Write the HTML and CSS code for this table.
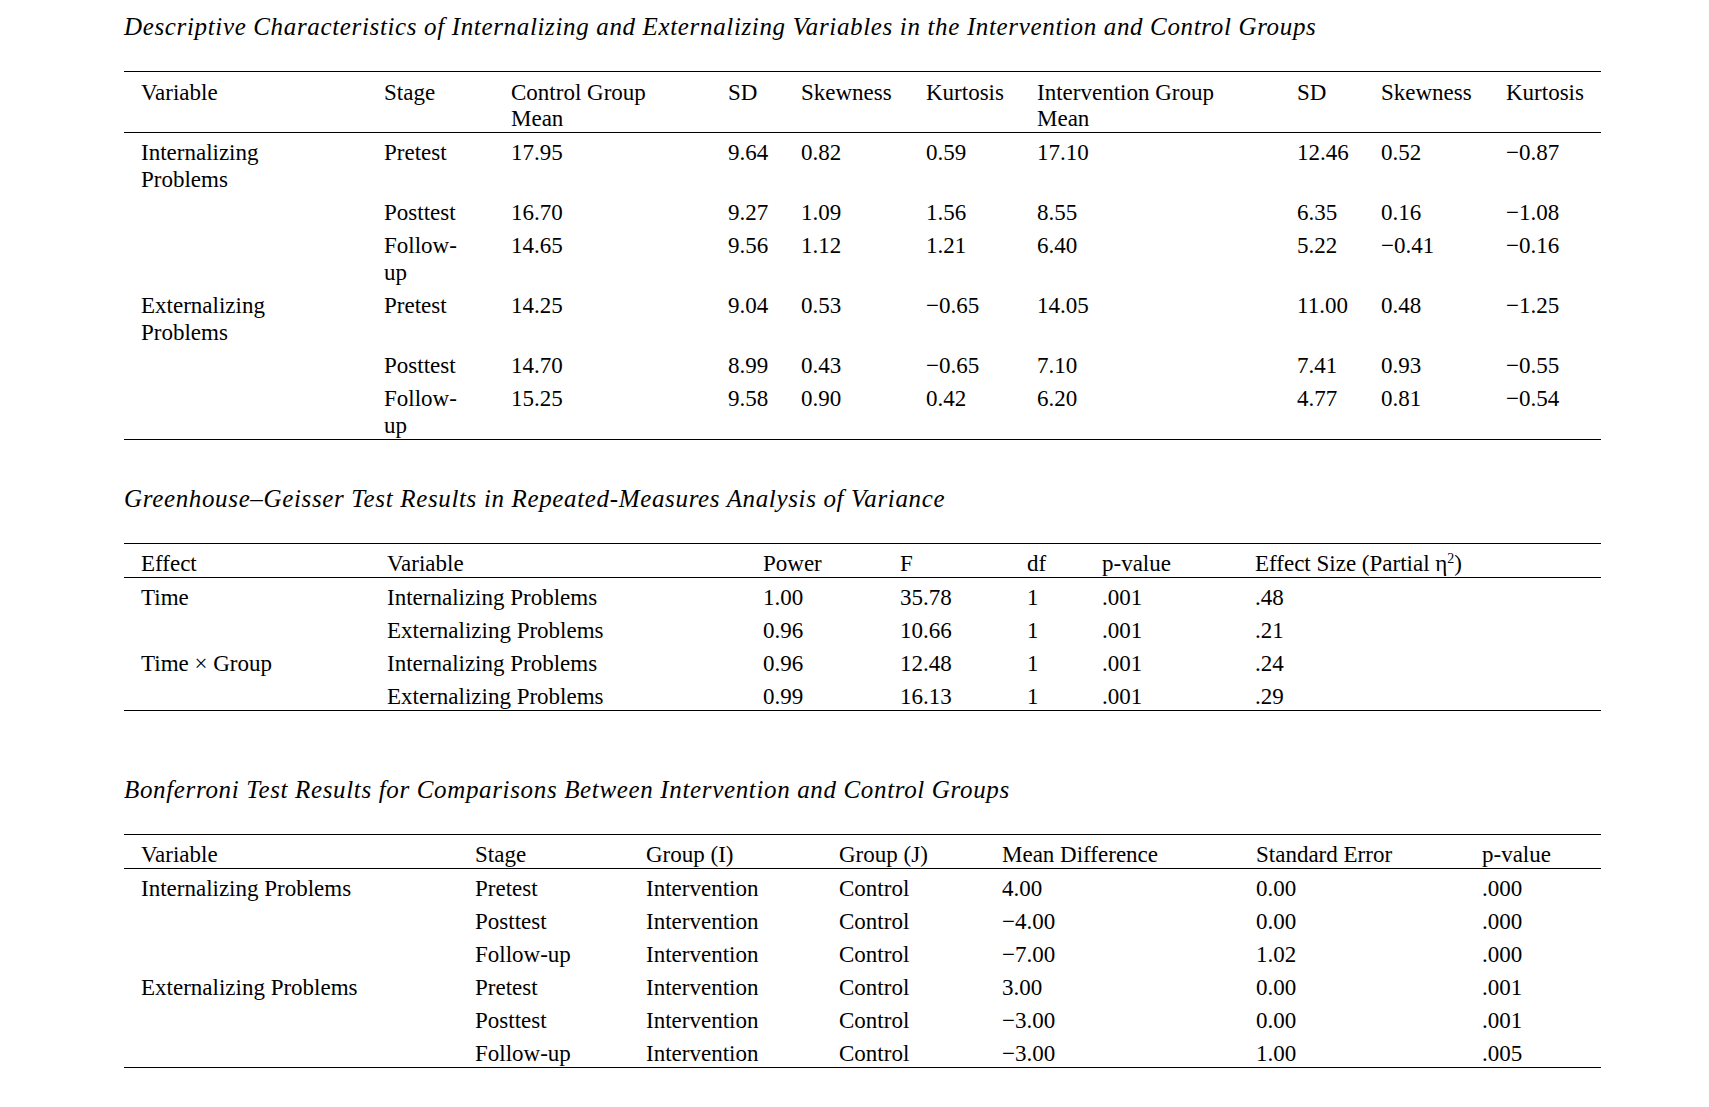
FILE: index.html
```html
<!DOCTYPE html>
<html lang="en">
<head>
<meta charset="utf-8">
<title>Tables</title>
<link rel="stylesheet" href="styles.css">
</head>
<body>
<main class="page">
  <section class="block block-first">
    <p class="caption">Descriptive Characteristics of Internalizing and Externalizing Variables in the Intervention and Control Groups</p>
    <table class="grid t1">
      <colgroup>
        <col class="w243"><col class="w127"><col class="w217"><col class="w73"><col class="w125"><col class="w111"><col class="w260"><col class="w84"><col class="w125"><col class="w112">
      </colgroup>
      <thead>
        <tr><th>Variable</th><th>Stage</th><th>Control Group<br>Mean</th><th>SD</th><th>Skewness</th><th>Kurtosis</th><th>Intervention Group<br>Mean</th><th>SD</th><th>Skewness</th><th>Kurtosis</th></tr>
      </thead>
      <tbody>
        <tr><td>Internalizing<br>Problems</td><td>Pretest</td><td>17.95</td><td>9.64</td><td>0.82</td><td>0.59</td><td>17.10</td><td>12.46</td><td>0.52</td><td>&minus;0.87</td></tr>
        <tr><td></td><td>Posttest</td><td>16.70</td><td>9.27</td><td>1.09</td><td>1.56</td><td>8.55</td><td>6.35</td><td>0.16</td><td>&minus;1.08</td></tr>
        <tr><td></td><td>Follow-<br>up</td><td>14.65</td><td>9.56</td><td>1.12</td><td>1.21</td><td>6.40</td><td>5.22</td><td>&minus;0.41</td><td>&minus;0.16</td></tr>
        <tr><td>Externalizing<br>Problems</td><td>Pretest</td><td>14.25</td><td>9.04</td><td>0.53</td><td>&minus;0.65</td><td>14.05</td><td>11.00</td><td>0.48</td><td>&minus;1.25</td></tr>
        <tr><td></td><td>Posttest</td><td>14.70</td><td>8.99</td><td>0.43</td><td>&minus;0.65</td><td>7.10</td><td>7.41</td><td>0.93</td><td>&minus;0.55</td></tr>
        <tr><td></td><td>Follow-<br>up</td><td>15.25</td><td>9.58</td><td>0.90</td><td>0.42</td><td>6.20</td><td>4.77</td><td>0.81</td><td>&minus;0.54</td></tr>
      </tbody>
    </table>
  </section>

  <section class="block block-second">
    <p class="caption">Greenhouse&ndash;Geisser Test Results in Repeated-Measures Analysis of Variance</p>
    <table class="grid t2">
      <colgroup>
        <col class="w246"><col class="w376"><col class="w137"><col class="w127"><col class="w75"><col class="w153"><col class="w363">
      </colgroup>
      <thead>
        <tr><th>Effect</th><th>Variable</th><th>Power</th><th>F</th><th>df</th><th>p-value</th><th>Effect Size (Partial &eta;<sup class="sq">2</sup>)</th></tr>
      </thead>
      <tbody>
        <tr><td>Time</td><td>Internalizing Problems</td><td>1.00</td><td>35.78</td><td>1</td><td>.001</td><td>.48</td></tr>
        <tr><td></td><td>Externalizing Problems</td><td>0.96</td><td>10.66</td><td>1</td><td>.001</td><td>.21</td></tr>
        <tr><td>Time &times; Group</td><td>Internalizing Problems</td><td>0.96</td><td>12.48</td><td>1</td><td>.001</td><td>.24</td></tr>
        <tr><td></td><td>Externalizing Problems</td><td>0.99</td><td>16.13</td><td>1</td><td>.001</td><td>.29</td></tr>
      </tbody>
    </table>
  </section>

  <section class="block block-third">
    <p class="caption">Bonferroni Test Results for Comparisons Between Intervention and Control Groups</p>
    <table class="grid t3">
      <colgroup>
        <col class="w334"><col class="w171"><col class="w193"><col class="w163"><col class="w254"><col class="w226"><col class="w136">
      </colgroup>
      <thead>
        <tr><th>Variable</th><th>Stage</th><th>Group (I)</th><th>Group (J)</th><th>Mean Difference</th><th>Standard Error</th><th>p-value</th></tr>
      </thead>
      <tbody>
        <tr><td>Internalizing Problems</td><td>Pretest</td><td>Intervention</td><td>Control</td><td>4.00</td><td>0.00</td><td>.000</td></tr>
        <tr><td></td><td>Posttest</td><td>Intervention</td><td>Control</td><td>&minus;4.00</td><td>0.00</td><td>.000</td></tr>
        <tr><td></td><td>Follow-up</td><td>Intervention</td><td>Control</td><td>&minus;7.00</td><td>1.02</td><td>.000</td></tr>
        <tr><td>Externalizing Problems</td><td>Pretest</td><td>Intervention</td><td>Control</td><td>3.00</td><td>0.00</td><td>.001</td></tr>
        <tr><td></td><td>Posttest</td><td>Intervention</td><td>Control</td><td>&minus;3.00</td><td>0.00</td><td>.001</td></tr>
        <tr><td></td><td>Follow-up</td><td>Intervention</td><td>Control</td><td>&minus;3.00</td><td>1.00</td><td>.005</td></tr>
      </tbody>
    </table>
  </section>
</main>
</body>
</html>
```

FILE: styles.css
```css
html, body {
  margin: 0;
  padding: 0;
  background: #ffffff;
}

body {
  font-family: "Liberation Serif", "Times New Roman", serif;
  font-size: 23px;
  line-height: 27px;
  color: #000000;
}

.page {
  width: 1477px;
  padding: 13px 0 0 124px;
}

.block {
  display: flex;
  flex-direction: column;
}

.block-second {
  margin-top: 45px;
}

.block-third {
  margin-top: 65px;
}

.caption {
  margin: 0 0 30px 0;
  font-style: italic;
  font-size: 25px;
  line-height: 28px;
  letter-spacing: 0.65px;
  white-space: nowrap;
}

.grid {
  width: 1477px;
  table-layout: fixed;
  border-collapse: collapse;
  border-top: 1.5px solid #000;
  border-bottom: 1.5px solid #000;
}

.grid th,
.grid td {
  font-weight: normal;
  text-align: left;
  vertical-align: top;
  padding: 6px 17px 0 17px;
  white-space: nowrap;
}

.grid thead th {
  padding-top: 7px;
  line-height: 26px;
  border-bottom: 1.5px solid #000;
}

.t1 thead th {
  padding-top: 8px;
}

.sq {
  font-size: 14px;
  line-height: 0;
  vertical-align: 8px;
}

.w73 { width: 73px; }
.w75 { width: 75px; }
.w84 { width: 84px; }
.w111 { width: 111px; }
.w112 { width: 112px; }
.w125 { width: 125px; }
.w127 { width: 127px; }
.w136 { width: 136px; }
.w137 { width: 137px; }
.w153 { width: 153px; }
.w163 { width: 163px; }
.w171 { width: 171px; }
.w193 { width: 193px; }
.w217 { width: 217px; }
.w226 { width: 226px; }
.w243 { width: 243px; }
.w246 { width: 246px; }
.w254 { width: 254px; }
.w260 { width: 260px; }
.w334 { width: 334px; }
.w363 { width: 363px; }
.w376 { width: 376px; }
```
